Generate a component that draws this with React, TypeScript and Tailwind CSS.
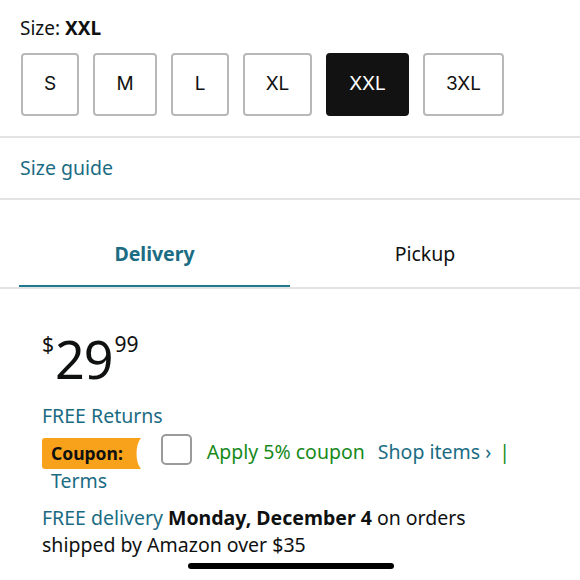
import React from 'react'

const SIZES = [
  { label: 'S', w: 'w-[58px]' },
  { label: 'M', w: 'w-[64px]' },
  { label: 'L', w: 'w-[58px]' },
  { label: 'XL', w: 'w-[69px]' },
  { label: 'XXL', w: 'w-[83px]' },
  { label: '3XL', w: 'w-[81px]' },
]

const SELECTED = 'XXL'

export default function App() {
  return (
    <div className="w-[580px] h-[580px] overflow-hidden bg-white text-[#0f1111] font-['Noto_Sans',sans-serif] relative">
      {/* Size picker */}
      <div className="px-5 pt-[14px]">
        <p className="text-[19px] leading-[28px]">
          Size: <span className="font-bold">XXL</span>
        </p>
        <div className="mt-[11px] flex gap-[14px] pl-px">
          {SIZES.map(s => (
            <div
              key={s.label}
              className={`${s.w} h-[63px] flex items-center justify-center rounded-[4px] border-2 text-[19px] font-['Inter',sans-serif]
                ${s.label === SELECTED ? 'bg-[#121212] border-[#121212] text-white' : 'border-[#b8b8b8] text-[#111]'}`}
            >
              {s.label}
            </div>
          ))}
        </div>
      </div>

      <div className="mt-[20px] h-[2px] bg-[#e3e3e3]" />

      <div className="px-5 h-[60px] flex items-center">
        <span className="text-[19.5px] text-[#1b6c83]">Size guide</span>
      </div>

      <div className="h-[2px] bg-[#e3e3e3]" />

      {/* Tabs */}
      <div className="relative flex pt-[34px]">
        <div className="ml-[19px] w-[271px] flex flex-col items-center">
          <span className="text-[19.5px] font-bold text-[#1b6c83] leading-[40px]">Delivery</span>
          <div className="mt-[11px] h-[3px] w-full bg-[#1f7a90]" />
        </div>
        <div className="flex-1 flex justify-center">
          <span className="ml-[-20px] text-[19.5px] leading-[40px] text-[#0f1111]">Pickup</span>
        </div>
        <div className="absolute left-0 right-0 bottom-[-1px] h-[2px] bg-[#e3e3e3]" />
      </div>

      {/* Price + offers */}
      <div className="px-[42px] pt-[49px]">
        <div className="flex items-start leading-none">
          <span className="text-[21px] mt-[-3px]">$</span>
          <span className="text-[52px] leading-[44px] ml-[1px] tracking-[-1px]">29</span>
          <span className="text-[21px] mt-[-3px] ml-[2px]">99</span>
        </div>

        <p className="mt-[20px] text-[19.5px] text-[#1b6c83] leading-[30px]">FREE Returns</p>

        <div className="mt-[-1px] flex items-start">
          <div className="flex items-start">
            <div className="h-[31px] mt-[8px] flex items-center">
              <span className="h-full flex items-center pl-[9px] pr-[4px] bg-[#f7a21a] text-[17.5px] font-bold rounded-l-[3px]">Coupon:</span>
              <svg width="14" height="31" viewBox="0 0 14 31" className="block">
                <path d="M0 0 H14 C8 7 8 24 14 31 H0 Z" fill="#f7a21a" />
              </svg>
            </div>
            <div className="ml-[20px] mt-[4px] w-[31px] h-[31px] rounded-[5px] border-2 border-[#9a9a9a] bg-white" />
          </div>
          <div className="ml-[15px] mt-[7px] text-[19.5px] leading-[30px] whitespace-nowrap">
            <span className="text-[#178a1b]">Apply 5% coupon</span>
            <span className="ml-[13px] text-[#1b6c83]">Shop items ›</span>
            <span className="ml-[8px] text-[#178a1b]">|</span>
          </div>
        </div>
        <p className="ml-[9px] mt-[-1px] text-[19.5px] leading-[26px] text-[#1b6c83]">Terms</p>

        <p className="mt-[10px] w-[440px] text-[19.5px] leading-[27px]">
          <span className="text-[#1b6c83]">FREE delivery</span>{' '}
          <span className="font-bold">Monday, December 4</span> on orders shipped by Amazon over $35
        </p>
      </div>

      {/* Home indicator */}
      <div className="absolute left-[188px] top-[563px] w-[206px] h-[6px] rounded-full bg-black" />
    </div>
  )
}
